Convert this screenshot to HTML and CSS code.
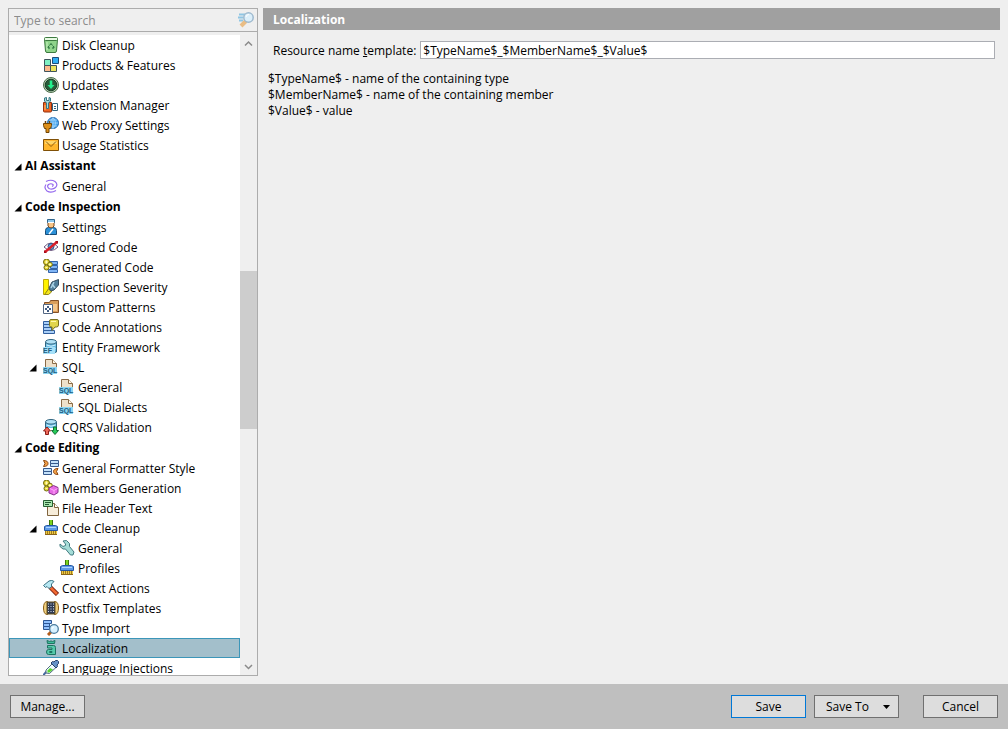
FILE: index.html
```
<!DOCTYPE html>
<html lang="en">
<head>
    <meta charset="utf-8">
    <title>Options</title>
    <link rel="stylesheet" href="styles.css">
</head>
<body>
    <!-- icon sprite -->
    <svg class="sprite" aria-hidden="true">
        <symbol id="arrow" viewBox="0 0 8 8"><path d="M7.500 .5V7.500H.5z" fill="#000"/></symbol>
        <symbol id="search" viewBox="0 0 16 16">
            <path d="M1 2.500h6M0 5.500h5M1 8.500h4" stroke="#8fc6e4" stroke-width="2"/>
            <path d="M8 9l-5 5" stroke="#e9bd85" stroke-width="4"/>
            <circle cx="10.500" cy="5.500" r="4.700" fill="#dceffa" stroke="#9db9ce" stroke-width="1.500"/>
            <path d="M8 5a3 3 0 0 1 3-2.500" stroke="#fff" fill="none"/>
        </symbol>
        <symbol id="bin" viewBox="0 0 16 16">
            <path d="M1.500 2.500h13l-1 11.500q-.2 1.500-1.500 1.500H4q-1.300 0-1.500-1.500z" fill="#8fd48b" stroke="#3c7a3f"/>
            <rect x="1.500" y=".5" width="13" height="3" rx="1" fill="#e8fae4" stroke="#3c7a3f"/>
            <path d="M4 5v8" stroke="#c8f2c0"/>
            <path d="M6.500 8.500L8 6.500l1.500 2M10.500 9l.5 2H9M7 11H5L5.500 9" fill="none" stroke="#216b38"/>
        </symbol>
        <symbol id="products" viewBox="0 0 16 16">
            <path d="M1.500 2.500h6v6h-6z" fill="#7ff0c4" stroke="#40545c"/>
            <path d="M1.500 8.500h6v6h-6z" fill="#fdb98c" stroke="#40545c"/>
            <path d="M7.500 8.500h6v6h-6z" fill="#ece35c" stroke="#40545c"/>
            <path d="M9.500 .5h6v6h-6z" fill="#31aef5" stroke="#1d4d79"/>
        </symbol>
        <symbol id="updates" viewBox="0 0 16 16">
            <circle cx="8" cy="8" r="7.500" fill="#b5ccb2" stroke="#4c6d4c"/>
            <circle cx="8" cy="8" r="5.800" fill="#285b39" stroke="#183f25"/>
            <path d="M6.700 3.500h2.600V8h2.200L8 12 4.500 8h2.200z" fill="#22f08c"/>
        </symbol>
        <symbol id="extension" viewBox="0 0 16 16">
            <path d="M.5 5.500h8v8.500q0 1-1 1h-6q-1 0-1-1z" fill="#ef6420" stroke="#93300f"/>
            <path d="M2 8v5" stroke="#ffc06b"/>
            <path d="M1.500 1v3l2 2v5.500h2V6l2-2V1L6 .5v3H3.500V.5z" fill="#a8dbdc" stroke="#377783"/>
            <path d="M9.500 6.500h5v7h-5z" fill="#fff" stroke="#33667f"/>
            <path d="M11 9.500h2M11 11.500h2" stroke="#33667f"/>
        </symbol>
        <symbol id="proxy" viewBox="0 0 16 16">
            <circle cx="10" cy="6" r="5.500" fill="#45a4ee" stroke="#1c65ad"/>
            <path d="M4.500 6h11M10 .5v11M6 3h8M6 9h8M10 .5q-5 5.500 0 11M10 .5q5 5.500 0 11" stroke="#bfe3fb" fill="none" stroke-width=".6"/>
            <path d="M2.500 4v3M6.500 4v3" stroke="#6b4310" stroke-width="1.500"/>
            <path d="M.5 6.500h8v2l-1 3H6v4H3v-4H1.500l-1-3z" fill="#dd8f19" stroke="#704405"/>
        </symbol>
        <symbol id="mail" viewBox="0 0 16 16">
            <path d="M.5 2.500h15v11H.5z" fill="#ffb62c" stroke="#805006"/>
            <path d="M2 4h12v3H2z" fill="#ffd566"/>
            <path d="M3 4.500l5 5 5-5" fill="none" stroke="#8b5a10"/>
        </symbol>
        <symbol id="spiral" viewBox="0 0 16 16">
            <path d="M3 3.500Q8 1 12 3.500q3.500 3 .5 6-3 2.500-6.500 1-2.500-2-.5-4 2.500-1.500 4.500 0 .5 1.500-1 2M13 12.500q-5 3-9 .5-3.500-3-1-6.500" fill="none" stroke="#9468ee" stroke-width="1.200"/>
        </symbol>
        <symbol id="user" viewBox="0 0 16 16">
            <path d="M2.500 15.500v-4q0-3 3-3h5q3 0 3 3v4z" fill="#2c91d8" stroke="#174c78"/>
            <path d="M5 3h6v4q-3 4-6 0z" fill="#f9c587" stroke="#73451d"/>
            <path d="M4.500 .5h7v3h-7z" fill="#8fc8ec" stroke="#30658d"/>
            <path d="M5 3.500h6" stroke="#fff"/>
            <path d="M10 10l-4 5" stroke="#fff" stroke-width="1.500"/>
        </symbol>
        <symbol id="ignored" viewBox="0 0 16 16">
            <path d="M1 8q7-8 14 0-7 7-14 0z" fill="#fff" stroke="#6c5780"/>
            <circle cx="8" cy="7.500" r="3" fill="#5aa9e6" stroke="#31497c"/>
            <path d="M2 13L14 3" stroke="#d91f29" stroke-width="2.400"/>
            <path d="M12 2h3v3M1 11v3h3" fill="#a80d1a"/>
        </symbol>
        <symbol id="lines" viewBox="0 0 16 16">
            <path d="M5.500 2.500h9v3h-9zM7.500 6.500h7v3h-7zM5.500 10.500h9v3h-9z" fill="#7fb4f5" stroke="#3363a8"/>
        </symbol>
        <symbol id="sparks" viewBox="0 0 16 16">
            <circle cx="3.500" cy="4" r="3" fill="#e7d733" stroke="#716b12"/>
            <circle cx="7" cy="6.500" r="2.300" fill="#f5ee57" stroke="#716b12"/>
            <circle cx="3.500" cy="9.500" r="2.500" fill="#e7d733" stroke="#716b12"/>
            <path d="M2 4h3M3.500 2.500v3M6 6.500h2M2.500 9.500h2" stroke="#fffbc0"/>
        </symbol>
        <symbol id="generated" viewBox="0 0 16 16"><use href="#lines"/><use href="#sparks" y="-1"/></symbol>
        <symbol id="severity" viewBox="0 0 16 16">
            <path d="M.5 .5h5v9l-3 6h-2z" fill="#fff200" stroke="#bba70c"/>
            <path d="M1.500 15.500l4-5.500h3v3l-3 2.500z" fill="#f3e420" stroke="#938617"/>
            <path d="M6 9l3-6 6.500-2.500v5.500L11 11l-3.500 1z" fill="#507e9b" stroke="#344d60"/>
            <path d="M9 5l3 4M11 3l-3 6" stroke="#a9d2e6" stroke-width="1.500"/>
        </symbol>
        <symbol id="patterns" viewBox="0 0 16 16">
            <path d="M1.500 3.500h5l1-2h8v12h-14z" fill="#d89d5b" stroke="#855026"/>
            <path d="M6 5h8v7H6z" fill="#f5c68b"/>
            <path d="M.5 5.500h9v9h-9z" fill="#fff" stroke="#536783"/>
            <path d="M4 7h2v2H4zM2 9h2v2H2zM6 9h2v2H6zM4 11h2v2H4z" fill="#405a80"/>
        </symbol>
        <symbol id="annotations" viewBox="0 0 16 16">
            <path d="M.5 2.500h7v3h-7zM.5 5.500h9v3h-9zM.5 8.500h8v3h-8zM.5 11.500h11v3H.5z" fill="#a9cff8" stroke="#315f9e"/>
            <path d="M8 .5h6q1.500 0 1.500 1.500v4q0 2-2 2H12l-3 3.500V8H8Q6.500 8 6.500 6.500V2Q6.500 .5 8 .5z" fill="#e1d54b" stroke="#787020"/>
            <path d="M8 2.500h5" stroke="#fff8a8"/>
        </symbol>
        <symbol id="db" viewBox="0 0 16 16">
            <path d="M2.500 3v10q5.500 3 11 0V3" fill="#67bce5" stroke="#326681"/>
            <path d="M3.500 6q4.500 2.500 9 0M3.500 9.500q4.500 2.500 9 0" fill="none" stroke="#d4f2ff"/>
            <ellipse cx="8" cy="2.800" rx="5.500" ry="2.300" fill="#b1e1f6" stroke="#326681"/>
        </symbol>
        <symbol id="entity" viewBox="0 0 16 16">
            <use href="#db"/>
            <path d="M0 8h12v7H0z" fill="#a6e0f8"/>
            <text x="0" y="14" class="glyph">EF</text>
        </symbol>
        <symbol id="sql" viewBox="0 0 16 16">
            <path d="M2.500 .5h7l4 4v10h-11z" fill="#eee0ca" stroke="#8a6b47"/>
            <path d="M9.500 .5v4h4" fill="#fff8e8" stroke="#8a6b47"/>
            <path d="M0 8h14v7H0z" fill="#8bd4f2"/>
            <text x="0" y="14" class="glyph">SQL</text>
        </symbol>
        <symbol id="cqrs" viewBox="0 0 16 16">
            <use href="#db"/>
            <path d="M0 9h16v7H0z" fill="#fff"/>
            <path d="M4 8l3.500 4h-2v3.500h-3V12h-2z" fill="#ef6a5b" stroke="#8d1f18"/>
            <path d="M12 15.500L8.500 11.500h2V8h3v3.500h2z" fill="#25cc58" stroke="#126d32"/>
        </symbol>
        <symbol id="formatter" viewBox="0 0 16 16">
            <path d="M7.500 .5h8v3h-8zM7.500 3.500h8v3h-8zM.5 8.500h8v3h-8zM.5 11.500h8v3h-8z" fill="#c5e2fb" stroke="#36598c"/>
            <path d="M.5 .5q4.500 0 4.500 3t-4.500 3l1.500-3zM15 8.500q-4.500 0-4.500 3t4.500 3l-1.500-3z" fill="#f3a047" stroke="#8c4813"/>
        </symbol>
        <symbol id="members" viewBox="0 0 16 16">
            <use href="#sparks" y="-1"/>
            <path d="M10.500 5.500l4.500 2v5l-4 2.500-5-2v-5z" fill="#e66be4" stroke="#88328c"/>
            <path d="M7 8.500l4 2 3.500-2M11 10.500V14" fill="none" stroke="#ffaafa"/>
        </symbol>
        <symbol id="header-text" viewBox="0 0 16 16">
            <path d="M4.500 3.500h7l4 4v8h-11z" fill="#f7edda" stroke="#80653f"/>
            <path d="M11.500 3.500v4h4" fill="#fff" stroke="#80653f"/>
            <path d="M.5 .5h9v6H.5z" fill="#a7e6ae" stroke="#285f34"/>
            <path d="M2 2.500h6M2 4.500h4" stroke="#245a31"/>
        </symbol>
        <symbol id="brush" viewBox="0 0 16 16">
            <path d="M6.500 -1h3v7h-3z" fill="#7bd320" stroke="#3f770b"/>
            <path d="M1.500 6.500l2-1h9l2 1v4h-13z" fill="#5e9be7" stroke="#2457a3"/>
            <path d="M3 7.500h10" stroke="#afd3ff"/>
            <path d="M2 11h12v4H2z" fill="#edcc43"/>
            <path d="M2.500 11v4M4.500 11v4M6.500 11v4M8.500 11v4M10.500 11v4M12.500 11v4" stroke="#a37a1e"/>
            <path d="M2 14.500h12" stroke="#8b6518"/>
        </symbol>
        <symbol id="wrench" viewBox="0 0 16 16">
            <path d="M4 1l3.500-.5 3 3v3l4.500 5.500-1 3-2.500 0L6.500 9H4L1 6.500V4l3 2.500 2.500-1V4z" fill="#a4dcd7" stroke="#427b80"/>
        </symbol>
        <symbol id="hammer" viewBox="0 0 16 16">
            <path d="M7 7l7.500 7.500" stroke="#7e2514" stroke-width="4.500"/>
            <path d="M6.500 6.500l7.500 7.500" stroke="#f26932" stroke-width="2.500"/>
            <path d="M.5 5.500L6 1q3-1.500 5 .5L8.500 4v3L6 8.500 4 6.500 2.500 7.500z" fill="#b7e8f3" stroke="#3b7182"/>
        </symbol>
        <symbol id="postfix" viewBox="0 0 16 16">
            <path d="M4.500 1.500h-1q-3 1-3 6.500t3 6.500h1zM11.500 1.500h1q3 1 3 6.500t-3 6.500h-1z" fill="#f0d080" stroke="#8a5d10"/>
            <rect x="4" y="2" width="8" height="12" fill="#303c55" stroke="#67501e"/>
            <path d="M5 4h6M5 6.500h6M5 9h6M5 11.500h6" stroke="#d5dde8" stroke-dasharray="1 1.500"/>
        </symbol>
        <symbol id="type-import" viewBox="0 0 16 16">
            <path d="M.5 .5h8v3h-8zM.5 3.500h6v3h-6zM.5 6.500h6v3h-6z" fill="#8fbffc" stroke="#2c5695"/>
            <path d="M8 12l-3 3" stroke="#b35c1c" stroke-width="3"/>
            <circle cx="11" cy="9" r="4.300" fill="#d7f1ff" stroke="#4b7c9e" stroke-width="1.300"/>
            <path d="M9 9q0-2 2-2" stroke="#fff" fill="none"/>
        </symbol>
        <symbol id="localization" viewBox="0 0 16 16">
            <path d="M4 .5l2.500 1L8 1l1.500 .5L12 .5l-.5 3h-7z" fill="#3fbd9c" stroke="#1d7361"/>
            <path d="M4.500 5.500h6q2 0 2 2v7h-7q-2 0-2-2.500t2-2.500h3.500V8h-4.500z" fill="#55c9aa" stroke="#1d7361"/>
            <path d="M6.500 11.500h2.500v1H6.500z" fill="#eafff6" stroke="#1d7361"/>
        </symbol>
        <symbol id="injection" viewBox="0 0 16 16">
            <path d="M4 11l-4 4.500" stroke="#43669d" stroke-width="2"/>
            <path d="M9.500 3.500l4 3.500-7 6.500-3.500-.5V10z" fill="#eefaff" stroke="#536e82"/>
            <path d="M4.500 10.500L7 8l3 1.500-3.500 3h-2z" fill="#58d52e"/>
            <path d="M8 3l1.500-1.500L11 2l1.500-1.500h2l1 1v2L14 5l.5 1.500L13 8z" fill="#6692c8" stroke="#263f69"/>
        </symbol>
    </svg>

    <main class="options">
        <nav class="sidebar">
            <div class="search">
                <input type="text" placeholder="Type to search" aria-label="Search options">
                <svg class="icon"><use href="#search"/></svg>
            </div>
            <div class="browser">
                <ul class="tree">
                    <li><a class="row" href="#"><svg class="icon"><use href="#bin"/></svg>Disk Cleanup</a></li>
                    <li><a class="row" href="#"><svg class="icon"><use href="#products"/></svg>Products &amp; Features</a></li>
                    <li><a class="row" href="#"><svg class="icon"><use href="#updates"/></svg>Updates</a></li>
                    <li><a class="row" href="#"><svg class="icon"><use href="#extension"/></svg>Extension Manager</a></li>
                    <li><a class="row" href="#"><svg class="icon"><use href="#proxy"/></svg>Web Proxy Settings</a></li>
                    <li><a class="row" href="#"><svg class="icon"><use href="#mail"/></svg>Usage Statistics</a></li>
                    <li><a class="row group" href="#"><svg class="arrow"><use href="#arrow"/></svg>AI Assistant</a></li>
                    <li><a class="row" href="#"><svg class="icon"><use href="#spiral"/></svg>General</a></li>
                    <li><a class="row group" href="#"><svg class="arrow"><use href="#arrow"/></svg>Code Inspection</a></li>
                    <li><a class="row" href="#"><svg class="icon"><use href="#user"/></svg>Settings</a></li>
                    <li><a class="row" href="#"><svg class="icon"><use href="#ignored"/></svg>Ignored Code</a></li>
                    <li><a class="row" href="#"><svg class="icon"><use href="#generated"/></svg>Generated Code</a></li>
                    <li><a class="row" href="#"><svg class="icon"><use href="#severity"/></svg>Inspection Severity</a></li>
                    <li><a class="row" href="#"><svg class="icon"><use href="#patterns"/></svg>Custom Patterns</a></li>
                    <li><a class="row" href="#"><svg class="icon"><use href="#annotations"/></svg>Code Annotations</a></li>
                    <li><a class="row" href="#"><svg class="icon"><use href="#entity"/></svg>Entity Framework</a></li>
                    <li>
                        <a class="row parent" href="#"><svg class="arrow"><use href="#arrow"/></svg><svg class="icon"><use href="#sql"/></svg>SQL</a>
                        <ul class="children">
                            <li><a class="row" href="#"><svg class="icon"><use href="#sql"/></svg>General</a></li>
                            <li><a class="row" href="#"><svg class="icon"><use href="#sql"/></svg>SQL Dialects</a></li>
                        </ul>
                    </li>
                    <li><a class="row" href="#"><svg class="icon"><use href="#cqrs"/></svg>CQRS Validation</a></li>
                    <li><a class="row group" href="#"><svg class="arrow"><use href="#arrow"/></svg>Code Editing</a></li>
                    <li><a class="row" href="#"><svg class="icon"><use href="#formatter"/></svg>General Formatter Style</a></li>
                    <li><a class="row" href="#"><svg class="icon"><use href="#members"/></svg>Members Generation</a></li>
                    <li><a class="row" href="#"><svg class="icon"><use href="#header-text"/></svg>File Header Text</a></li>
                    <li>
                        <a class="row parent" href="#"><svg class="arrow"><use href="#arrow"/></svg><svg class="icon"><use href="#brush"/></svg>Code Cleanup</a>
                        <ul class="children">
                            <li><a class="row" href="#"><svg class="icon"><use href="#wrench"/></svg>General</a></li>
                            <li><a class="row" href="#"><svg class="icon"><use href="#brush"/></svg>Profiles</a></li>
                        </ul>
                    </li>
                    <li><a class="row" href="#"><svg class="icon"><use href="#hammer"/></svg>Context Actions</a></li>
                    <li><a class="row" href="#"><svg class="icon"><use href="#postfix"/></svg>Postfix Templates</a></li>
                    <li><a class="row" href="#"><svg class="icon"><use href="#type-import"/></svg>Type Import</a></li>
                    <li><a class="row selected" href="#" aria-current="page"><svg class="icon"><use href="#localization"/></svg>Localization</a></li>
                    <li><a class="row" href="#"><svg class="icon"><use href="#injection"/></svg>Language Injections</a></li>
                </ul>
                <div class="scrollbar" aria-hidden="true">
                    <svg class="chevron" viewBox="0 0 17 17"><path d="M5 10.500L8.500 7l3.500 3.500"/></svg>
                    <div class="track-before"></div>
                    <div class="thumb"></div>
                    <div class="track-after"></div>
                    <svg class="chevron" viewBox="0 0 17 17"><path d="M5 7l3.500 3.500L12 7"/></svg>
                </div>
            </div>
        </nav>

        <section class="page">
            <h1>Localization</h1>
            <div class="field">
                <label for="template">Resource name <u>t</u>emplate:</label>
                <input type="text" id="template" value="$TypeName$_$MemberName$_$Value$">
            </div>
            <p>
                $TypeName$ - name of the containing type<br>
                $MemberName$ - name of the containing member<br>
                $Value$ - value
            </p>
        </section>
    </main>

    <footer class="actions">
        <button type="button">Manage...</button>
        <button type="button" class="default">Save</button>
        <button type="button" class="split" aria-haspopup="menu">Save To <svg class="caret" viewBox="0 0 7 4"><path d="M0 0h7L3.500 4z"/></svg></button>
        <button type="button" class="cancel">Cancel</button>
    </footer>
</body>
</html>
```
FILE: styles.css
```
* {
    box-sizing: border-box;
}
body {
    margin: 0;
    height: 100vh;
    display: flex;
    flex-direction: column;
    background: #efefef;
    color: #000;
    font-family: "Open Sans", "Noto Sans", sans-serif;
    font-size: 12px;
    line-height: 16px;
}
input, button {
    font: inherit;
    color: inherit;
}
.sprite {
    display: none;
}
.glyph {
    font: bold 7px "Liberation Sans", sans-serif;
    fill: #1f5d80;
}
.icon {
    width: 16px;
    height: 16px;
    flex: none;
}
.arrow {
    width: 8px;
    height: 8px;
    flex: none;
    align-self: center;
}
.options {
    flex: 1;
    min-height: 0;
    display: flex;
    gap: 5px;
    padding: 8px;
}

/* left side */
.sidebar {
    width: 250px;
    flex: none;
    display: flex;
    flex-direction: column;
    border: 1px solid #acacac;
}
.search {
    display: flex;
    align-items: center;
    height: 23px;
    padding-right: 3px;
    border-bottom: 1px solid #acacac;
}
.search input {
    flex: 1;
    min-width: 0;
    padding: 2px 5px 0;
    border: none;
    outline: none;
    background: transparent;
}
.search input::placeholder {
    color: #8c8c8c;
}
.browser {
    flex: 1;
    min-height: 0;
    display: flex;
    margin-top: 3px;
}
.tree {
    flex: 1;
    margin: 0;
    padding: 0;
    overflow: hidden;
    list-style: none;
    background: #fff;
}
.children {
    margin: 0;
    padding: 0 0 0 16px;
    list-style: none;
}
.row {
    display: flex;
    align-items: flex-start;
    gap: 3px;
    height: 20px;
    padding: 2px 0 0 34px;
    color: inherit;
    line-height: 18px;
    text-decoration: none;
    white-space: nowrap;
}
.parent {
    padding-left: 20px;
}
.parent .arrow {
    margin-right: 3px;
}
.group {
    height: 21px;
    padding-left: 5px;
    font-weight: bold;
}
.selected {
    padding: 1px 0 0 33px;
    background: #a3bfcb;
    border: 1px solid #3c96b9;
}
.scrollbar {
    width: 17px;
    display: flex;
    flex-direction: column;
}
.chevron {
    width: 17px;
    height: 17px;
    fill: none;
    stroke: #8a8a8a;
    stroke-width: 1.5;
}
.track-before {
    flex: 219;
}
.thumb {
    flex: 158;
    background: #cdcdcd;
}
.track-after {
    flex: 229;
}

/* right side */
.page {
    flex: 1;
}
.page h1 {
    margin: 0;
    padding: 4px 10px 2px;
    background: #a0a0a0;
    color: #fff;
    font-size: 12px;
}
.field {
    display: flex;
    align-items: center;
    gap: 4px;
    padding: 11px 5px 0 10px;
}
.field label {
    padding-top: 2px;
}
.field input {
    flex: 1;
    height: 18px;
    padding: 0 2px;
    border: 1px solid #abadb3;
    background: #fff;
}
.page p {
    margin: 12px 5px;
}

/* bottom bar */
.actions {
    display: flex;
    gap: 8px;
    padding: 11px 10px;
    background: #bfbfbf;
}
.actions button {
    width: 75px;
    height: 23px;
    padding: 0;
    border: 1px solid #707070;
    background: #ddd;
}
.actions .default {
    margin-left: auto;
    border-color: #0078d7;
}
.actions .split {
    display: flex;
    align-items: center;
    justify-content: space-between;
    width: 85px;
    padding: 0 8px 0 11px;
}
.caret {
    width: 7px;
    height: 4px;
}
.actions .cancel {
    margin-left: 16px;
}
```
